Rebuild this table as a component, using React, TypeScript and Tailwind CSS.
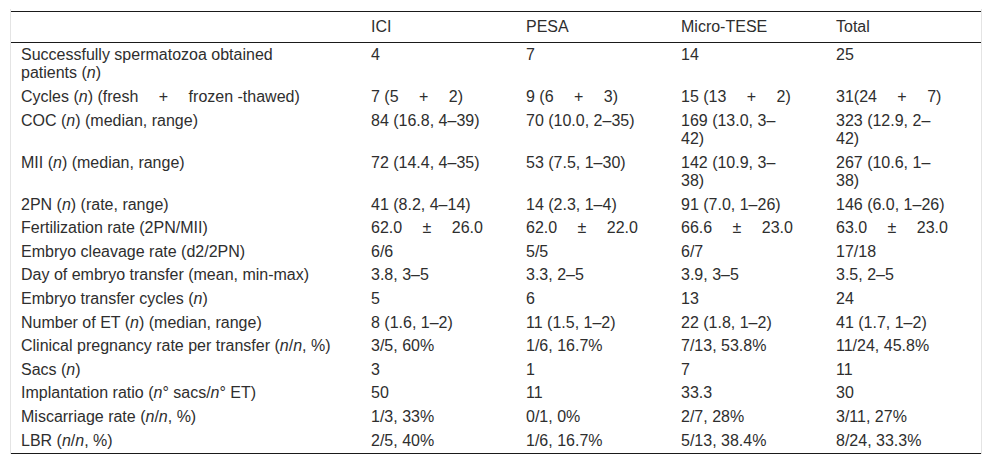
import React from "react";

const G = " \u2003";

function N() {
  return <i>n</i>;
}

type Row = { label: React.ReactNode; cells: string[] };

const rows: Row[] = [
  { label: <>Successfully spermatozoa obtained patients (<N />)</>, cells: ["4", "7", "14", "25"] },
  {
    label: <>Cycles (<N />) (fresh{G}+{G}frozen -thawed)</>,
    cells: [`7 (5${G}+${G}2)`, `9 (6${G}+${G}3)`, `15 (13${G}+${G}2)`, `31(24${G}+${G}7)`],
  },
  { label: <>COC (<N />) (median, range)</>, cells: ["84 (16.8, 4–39)", "70 (10.0, 2–35)", "169 (13.0, 3–42)", "323 (12.9, 2–42)"] },
  { label: <>MII (<N />) (median, range)</>, cells: ["72 (14.4, 4–35)", "53 (7.5, 1–30)", "142 (10.9, 3–38)", "267 (10.6, 1–38)"] },
  { label: <>2PN (<N />) (rate, range)</>, cells: ["41 (8.2, 4–14)", "14 (2.3, 1–4)", "91 (7.0, 1–26)", "146 (6.0, 1–26)"] },
  {
    label: <>Fertilization rate (2PN/MII)</>,
    cells: [`62.0${G}±${G}26.0`, `62.0${G}±${G}22.0`, `66.6${G}±${G}23.0`, `63.0${G}±${G}23.0`],
  },
  { label: <>Embryo cleavage rate (d2/2PN)</>, cells: ["6/6", "5/5", "6/7", "17/18"] },
  { label: <>Day of embryo transfer (mean, min-max)</>, cells: ["3.8, 3–5", "3.3, 2–5", "3.9, 3–5", "3.5, 2–5"] },
  { label: <>Embryo transfer cycles (<N />)</>, cells: ["5", "6", "13", "24"] },
  { label: <>Number of ET (<N />) (median, range)</>, cells: ["8 (1.6, 1–2)", "11 (1.5, 1–2)", "22 (1.8, 1–2)", "41 (1.7, 1–2)"] },
  {
    label: <>Clinical pregnancy rate per transfer (<N />/<N />, %)</>,
    cells: ["3/5, 60%", "1/6, 16.7%", "7/13, 53.8%", "11/24, 45.8%"],
  },
  { label: <>Sacs (<N />)</>, cells: ["3", "1", "7", "11"] },
  { label: <>Implantation ratio (<N />° sacs/<N />° ET)</>, cells: ["50", "11", "33.3", "30"] },
  { label: <>Miscarriage rate (<N />/<N />, %)</>, cells: ["1/3, 33%", "0/1, 0%", "2/7, 28%", "3/11, 27%"] },
  { label: <>LBR (<N />/<N />, %)</>, cells: ["2/5, 40%", "1/6, 16.7%", "5/13, 38.4%", "8/24, 33.3%"] },
];

const headers = ["ICI", "PESA", "Micro-TESE", "Total"];

export default function App() {
  return (
    <div className="w-[992px] h-[470px] bg-white font-['Liberation_Sans',Arial,sans-serif] text-[16px] text-[#2e2e2e]">
      <div className="ml-[10px] mt-[9px] w-[972px] border-x border-[#e4e4e4] pt-[2px]">
        <table className="w-[970px] table-fixed border-collapse">
          <colgroup>
            <col className="w-[350px]" />
            <col className="w-[155px]" />
            <col className="w-[155px]" />
            <col className="w-[155px]" />
            <col className="w-[155px]" />
          </colgroup>
          <thead>
            <tr className="border-t border-b border-[#1a1a1a]">
              <th className="pl-[10px] pr-[30px] py-[6px] font-normal text-left leading-[18.4px]"></th>
              {headers.map((h) => (
                <th key={h} className="pl-[10px] pr-[30px] py-[6px] font-normal text-left leading-[18.4px]">
                  {h}
                </th>
              ))}
            </tr>
          </thead>
          <tbody>
            {rows.map((r, i) => (
              <tr key={i} className={i === rows.length - 1 ? "border-b border-[#1a1a1a]" : ""}>
                <td className="pl-[10px] pr-[30px] py-[2.6px] align-top text-left leading-[18.4px]">{r.label}</td>
                {r.cells.map((c, j) => (
                  <td key={j} className="pl-[10px] pr-[30px] py-[2.6px] align-top text-left leading-[18.4px]">
                    {c}
                  </td>
                ))}
              </tr>
            ))}
          </tbody>
        </table>
      </div>
    </div>
  );
}
